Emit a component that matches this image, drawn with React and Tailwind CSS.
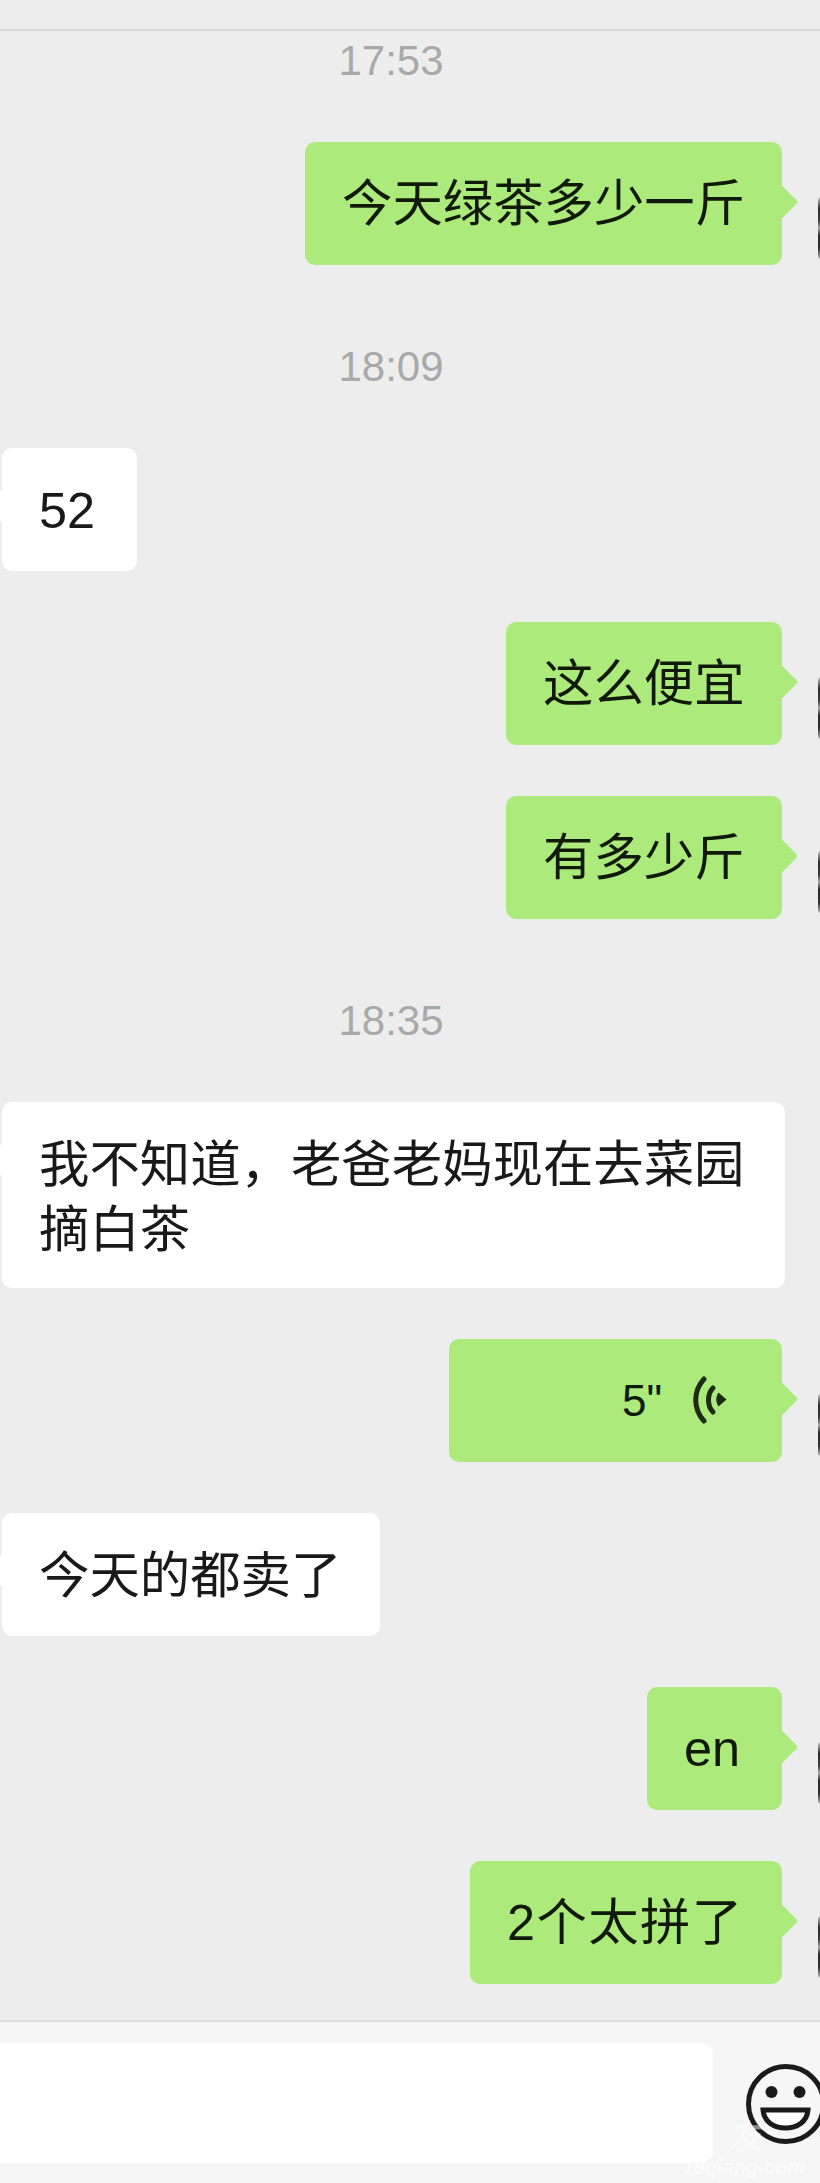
const MESSAGES = [
  { type: 'time', text: '17:53', top: 'mt-[5px]' },
  { type: 'out', text: '今天绿茶多少一斤', top: 'mt-[58px]', width: 'w-[477px]' },
  { type: 'time', text: '18:09', top: 'mt-[77px]' },
  { type: 'in', text: '52', top: 'mt-[58px]', width: 'w-[135px]' },
  { type: 'out', text: '这么便宜', top: 'mt-[51px]', width: 'w-[276px]' },
  { type: 'out', text: '有多少斤', top: 'mt-[51px]', width: 'w-[276px]' },
  { type: 'time', text: '18:35', top: 'mt-[77px]' },
  { type: 'in', text: '我不知道，老爸老妈现在去菜园摘白茶', top: 'mt-[58px]', width: 'w-[783px]' },
  { type: 'voice', text: '5"', top: 'mt-[51px]', width: 'w-[333px]' },
  { type: 'in', text: '今天的都卖了', top: 'mt-[51px]', width: 'w-[378px]' },
  { type: 'out', text: 'en', top: 'mt-[51px]', width: 'w-[135px]' },
  { type: 'out', text: '2个太拼了', top: 'mt-[51px]', width: 'w-[312px]', extra: 'tracking-[1.4px]' },
];

function VoiceIcon() {
  return (
    <svg width="34" height="48" viewBox="0 0 34 48" fill="none" stroke="#1f2a14" strokeWidth="5" strokeLinecap="round" className="shrink-0">
      <path d="M11 3C0 15 0 33 11 45" />
      <path d="M20 12C14 18 14 30 20 36" />
      <path d="M25.5 16.5L33.5 23.5L25.5 30.5C22.5 26 22.5 21 25.5 16.5Z" fill="#1f2a14" stroke="none" />
    </svg>
  );
}

function Smiley() {
  return (
    <svg width="80" height="80" viewBox="0 0 80 80" fill="none" className="shrink-0">
      <circle cx="40" cy="40" r="37.5" stroke="#1a1a1a" strokeWidth="5" />
      <circle cx="25.5" cy="28" r="6" fill="#1a1a1a" />
      <circle cx="53.5" cy="28" r="6" fill="#1a1a1a" />
      <path d="M17 46H62C61 58 51 64 39.5 64C28 64 18 58 17 46Z" fill="#fff" stroke="#1a1a1a" strokeWidth="5" strokeLinejoin="miter" />
    </svg>
  );
}

function TimeRow({ msg }) {
  return (
    <div className={`${msg.top} h-[48px] pr-[38px] flex items-center justify-center text-[42px] text-[#a9a9a9]`}>
      {msg.text}
    </div>
  );
}

function OutRow({ msg, voice }) {
  return (
    <div className={`${msg.top} flex justify-end`}>
      <div className={`${msg.width} relative h-[123px] mr-[38px] pb-[1px] rounded-[10px] bg-[#aceb7b] flex items-center text-[50.4px] leading-[65px] text-[#111a08] ${voice ? 'justify-end pr-[55px] gap-[31px]' : 'pl-[37px]'}`}>
        {voice ? (
          <>
            <span className="text-[44px]">{msg.text}</span>
            <VoiceIcon />
          </>
        ) : (
          <span className={`whitespace-nowrap ${msg.extra || ''}`}>{msg.text}</span>
        )}
        {/* tail */}
        <div className="absolute right-[-11px] top-[47px] w-[26px] h-[26px] rotate-45 rounded-[3px] bg-[#aceb7b]" />
        {/* avatar edge */}
        <div className="absolute left-[calc(100%+36px)] top-[55px] w-[3px] h-[62px] rounded-l-[3px] bg-[linear-gradient(180deg,#c9c9c9_0%,#2c2c2c_18%,#3a3a3a_38%,#a8a8a8_50%,#2a2a2a_62%,#333333_84%,#bdbdbd_100%)]" />
      </div>
    </div>
  );
}

function InRow({ msg }) {
  return (
    <div className={`${msg.top} pl-[2px]`}>
      <div className={`${msg.width} relative min-h-[123px] rounded-[10px] bg-white px-[37px] pt-[30px] pb-[26px] text-[50.4px] leading-[65px] text-[#191919]`}>
        {msg.text}
        <div className="absolute left-[-11px] top-[45px] w-[26px] h-[26px] rotate-45 bg-white" />
      </div>
    </div>
  );
}

export default function App() {
  return (
    <div className="relative w-[820px] h-[2183px] overflow-hidden flex flex-col bg-[#ededed] font-['Liberation_Sans','Noto_Sans_CJK_SC',sans-serif]">
      <div className="h-[31px] shrink-0 border-b-2 border-[#d9d9d9]" />
      <div className="flex-1">
        {MESSAGES.map((msg, i) => {
          if (msg.type === 'time') return <TimeRow key={i} msg={msg} />;
          if (msg.type === 'in') return <InRow key={i} msg={msg} />;
          return <OutRow key={i} msg={msg} voice={msg.type === 'voice'} />;
        })}
      </div>
      <div className="h-[163px] shrink-0 border-t-2 border-[#dcdcdc] bg-[#f6f6f6] flex items-center">
        <div className="w-[713px] h-[120px] shrink-0 rounded-r-[12px] bg-white" />
        <div className="ml-[33px] mt-[2px] shrink-0">
          <Smiley />
        </div>
      </div>
      {/* watermark */}
      <div className="absolute right-[58px] bottom-[26px] text-[34px] leading-[40px] font-bold italic text-white/50">友</div>
      <div className="absolute right-[15px] bottom-[4px] text-[20px] leading-[24px] font-bold italic text-white/60">18qiang.com</div>
    </div>
  );
}
